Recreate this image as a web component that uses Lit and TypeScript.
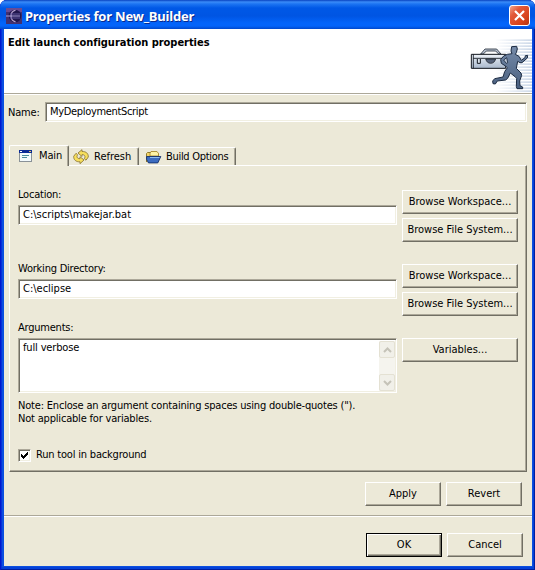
import { LitElement, html, css, svg } from "lit";
import { customElement, property } from "lit/decorators.js";

const eclipseIcon = html`<svg width="16" height="16" viewBox="0 0 16 16">
  <rect width="16" height="16" fill="#43306f"/>
  <rect x="0" y="0" width="16" height="4" fill="#6a4c92"/>
  <circle cx="9" cy="8" r="6.300" fill="#20164c"/>
  <path d="M9.500 2.200a6 6 0 0 0 0 11.600" fill="none" stroke="#b9a3d0" stroke-width="1.200"/>
  <path d="M0 8h14" stroke="#a8a0dc" stroke-width="1.200"/>
  <path d="M4 6h10M4 10h10" stroke="#5d5398" stroke-width="1"/>
</svg>`;

const mainIcon = html`<svg width="14" height="12" viewBox="0 0 14 12" shape-rendering="crispEdges">
  <rect x="0" y="0" width="13" height="12" fill="#8a9298"/>
  <rect x="1" y="3" width="11" height="8" fill="#f3fafc"/>
  <rect x="0" y="0" width="13" height="3" fill="#0a2a96"/>
  <rect x="1" y="1" width="2" height="1" fill="#fff"/>
  <rect x="10" y="1" width="2" height="1" fill="#e8c860"/>
  <rect x="3" y="5" width="7" height="1" fill="#4a8c9c"/>
  <rect x="3" y="7" width="5" height="1" fill="#4a8c9c"/>
</svg>`;

const refreshIcon = html`<svg width="16" height="16" viewBox="0 0 16 16">
  <g fill="#f7df5c" stroke="#8f7a3c" stroke-width=".9" stroke-linejoin="round">
    <path d="M5 4 9 .7V2.500C13 2.300 15.500 4.500 15.300 8L13 11.200 11.300 9.700C12.800 7.500 11.800 5.600 9 5.600V7.500z"/>
    <path d="M11 11 7 14.700V12.800C3 13 .5 10.800 .7 7.300L3 4.300 4.700 5.800C3.200 7.800 4.200 9.700 7 9.700V7.700z"/>
  </g>
</svg>`;

const folderIcon = html`<svg width="17" height="14" viewBox="0 0 17 14">
  <path d="M1.500 12V3.500l1-1h3l1 1h7v4" fill="#f3d468" stroke="#8f7a2c"/>
  <path d="M5 3.500 6 1.500h6l1.500 2V6H5z" fill="#fdf3a6" stroke="#a88a30" stroke-width=".9"/>
  <path d="M3.500 12.900 1.600 9.500V6.500H15.800L12.800 12.900z" fill="#3c6cc0" stroke="#14306c" stroke-width=".9"/>
  <path d="M5 7.500h9.500" stroke="#8dbcf0"/>
</svg>`;

const stripes = Array.from({ length: 19 }, (_, i) => 118 + i * 9);

const runnerArt = html`<svg width="62" height="64" viewBox="90 87 186 192">
  <defs>
    <linearGradient id="fade"><stop offset="0" stop-color="#fff"/><stop offset="1" stop-color="#ccd8e8"/></linearGradient>
    <linearGradient id="case" x2="0" y2="1"><stop offset="0" stop-color="#edf2f8"/><stop offset="1" stop-color="#a9b8cc"/></linearGradient>
    <linearGradient id="body" x2="0" y2="1"><stop offset="0" stop-color="#758aa8"/><stop offset="1" stop-color="#4a6080"/></linearGradient>
  </defs>
  ${stripes.map((y) => svg`<rect x="165" y=${y} width="111" height="5" fill="url(#fade)"/>`)}
  <path d="M122 162 135 147H170L183 162H176L167 153H139L130 162z" fill="#b9c2d0" stroke="#27303d" stroke-width="2.500"/>
  <path d="M94 163H197V205H94z" fill="url(#case)" stroke="#10151c" stroke-width="3"/>
  <path d="M100 163V205M100 175H190" stroke="#10151c" stroke-width="2.500" fill="none"/>
  <path d="M112 177V190H121V177" fill="#dbe3ec" stroke="#10151c" stroke-width="3"/>
  <path d="M137 177H167Q163 190 152 190T137 177" fill="#56637a" stroke="#10151c" stroke-width="2"/>
  <path d="M215 140 230 139 232 147 229 158 226 163 237 169 244 181 255 173 256 167 263 166 262 174 246 188 240 188 233 184 229 205 243 219 245 226 239 243 240 257 248 261 248 266 231 266 229 260 230 235 225 230 211 219 203 235 197 240 172 243 166 252 159 251 158 243 164 236 189 231 194 215 202 203 195 197 184 190 182 179 191 168 202 163 216 161 213 153z" fill="url(#body)" stroke="#1c2b42" stroke-width="3" stroke-linejoin="round"/>
  <path d="M191 180 200 173 203 188 199 190z" fill="#c0cbda" stroke="#17253b" stroke-width="2.500"/>
</svg>`;

@customElement("push-button")
class PushButton extends LitElement {
  @property() label = "";
  @property({ type: Boolean, reflect: true }) primary = false;
  static styles = css`
    :host { display: block; height: 24px; width: 76px; }
    button {
      box-sizing: border-box; width: 100%; height: 24px; padding: 0 0 1px; display: block;
      font: inherit; color: #000; background: #ece9d8; white-space: nowrap;
      border: 1px solid; border-color: #fff #716f64 #716f64 #fff;
      box-shadow: inset -1px -1px #aca899;
    }
    :host([primary]) button { border-color: #000; box-shadow: inset 1px 1px #fff, inset -1px -1px #716f64, inset -2px -2px #aca899; }
  `;
  render() { return html`<button>${this.label}</button>`; }
}

@customElement("text-box")
class TextBox extends LitElement {
  @property() value = "";
  static styles = css`
    :host {
      display: block; box-sizing: border-box; height: 20px; background: #fff; padding: 2px 0 0 4px; line-height: 14px;
      border: 1px solid; border-color: #aca899 #fff #fff #aca899;
      box-shadow: inset 1px 1px #716f64, inset -1px -1px #f1efe2;
    }
  `;
  render() { return html`<span>${this.value}</span>`; }
}

@customElement("app-root")
class AppRoot extends LitElement {
  static styles = css`
    :host {
      display: block; width: 535px; height: 570px; background: #fff; color: #000;
      font: 11px/14px "DejaVu Sans Condensed", "DejaVu Sans", sans-serif; font-stretch: condensed;
    }
    svg { display: block; flex: none; }
    .window {
      box-sizing: border-box; width: 535px; height: 570px; display: flex; flex-direction: column;
      border-radius: 7px 7px 0 0; padding: 0 3px 4px 4px; overflow: hidden;
      background: #0b4fe0;
      box-shadow: inset 1px 0 #0019cf, inset -1px 0 #001ea0, inset 0 -1px #001ea0, inset 2px 0 #0831d9, inset -2px 0 #0441d8, inset 0 -3px #0441d8;
    }
    .title {
      flex: none; height: 29px; margin: 0 -3px 0 -4px; padding: 2px 5px 0 6px; box-sizing: border-box;
      display: flex; align-items: center; gap: 3px;
      background: linear-gradient(#0842c0 0, #3a8bf8 2px, #1c74f2 4px, #0058e6 8px, #0055e3 16px, #0364fa 23px, #0364fa 26px, #0048cc 29px);
    }
    .title h1 {
      margin: 0; flex: 1; color: #fff; font: bold 13px/18px "Noto Sans", sans-serif; letter-spacing: -.2px;
      text-shadow: 1px 1px #0a2a8c; white-space: nowrap;
    }
    .close {
      box-sizing: border-box; width: 21px; height: 21px; padding: 0; border: 1px solid #fff; border-radius: 3px;
      background: linear-gradient(135deg, #f0a58c 0, #e2593a 30%, #d8431b 70%, #b23512);
      display: grid; place-items: center;
    }
    .header { flex: none; height: 64px; background: #fff; display: flex; justify-content: space-between; }
    .header h2 { margin: 0; padding: 7px 0 0 4px; font-size: 11px; line-height: 14px; font-weight: bold; letter-spacing: -.03px; white-space: nowrap; }
    .line { flex: none; height: 1px; background: #aca899; border-bottom: 1px solid #fff; }
    .body { flex: 1; background: #ece9d8; display: flex; flex-direction: column; }
    .name { display: flex; align-items: center; padding: 7px 5px 0 4px; }
    .name label { width: 37px; padding-top: 1px; letter-spacing: -.2px; }
    .name text-box { flex: 1; letter-spacing: -.33px; }
    .tabs { display: flex; align-items: flex-end; height: 20px; margin: 23px 0 0 5px; }
    .tab {
      box-sizing: border-box; height: 18px; display: flex; align-items: center; position: relative; white-space: nowrap;
      border: 1px solid; border-color: #fff #716f64 transparent transparent; border-bottom: 0; border-radius: 2px 2px 0 0;
      box-shadow: inset -1px 0 #aca899; padding: 1px 0 0 5px; gap: 5px;
    }
    .tab.active { height: 21px; margin-bottom: -1px; width: 60px; padding: 0 0 1px 9px; background: #ece9d8; border-left-color: #fff; z-index: 1; gap: 6px; letter-spacing: -.15px; }
    .tab.refresh { width: 70px; padding-left: 3px; }
    .tab.build { width: 97px; padding-left: 5px; gap: 4px; letter-spacing: -.3px; }
    .panel {
      box-sizing: border-box; height: 307px; margin: 0 5px 0 5px; padding: 0 8px;
      border: 1px solid; border-color: #fff #716f64 #716f64 #fff; box-shadow: inset -1px -1px #aca899;
    }
    .row { display: grid; grid-template-columns: 379px 116px; column-gap: 5px; height: 74px; }
    .row.first { padding-top: 24px; }
    .row.second { height: 57px; }
    .field .cap { height: 17px; margin-top: -2px; }
    .cap { height: 17px; white-space: nowrap; letter-spacing: -.22px; }
    .stack { display: flex; flex-direction: column; gap: 4px; }
    push-button.wide { width: 116px; }
    .row.args { height: 59px; }
    .area {
      box-sizing: border-box; height: 55px; background: #fff; display: flex; justify-content: space-between;
      border: 1px solid; border-color: #aca899 #fff #fff #aca899; box-shadow: inset 1px 1px #716f64, inset -1px -1px #f1efe2;
      padding: 2px 1px 1px 4px; letter-spacing: -.15px;
    }
    .scroll { width: 16px; background: #f5f4ee; display: flex; flex-direction: column; justify-content: space-between; }
    .arrow { box-sizing: border-box; width: 16px; height: 17px; border: 1px solid #e4e1d3; border-radius: 2px; background: #f1f0e9; display: grid; place-items: center; }
    .note { margin-top: 2px; line-height: 13px; white-space: nowrap; letter-spacing: -.19px; }
    .check { display: flex; align-items: center; gap: 5px; margin-top: 23px; letter-spacing: -.19px; }
    .box { box-sizing: border-box; width: 13px; height: 13px; background: #fff; border: 1px solid; border-color: #aca899 #fff #fff #aca899; box-shadow: inset 1px 1px #716f64, inset -1px -1px #f1efe2; }
    .actions { display: flex; justify-content: flex-end; gap: 5px; padding: 10px 10px 9px 0; }
    .footer { display: flex; justify-content: flex-end; gap: 5px; padding: 16px 9px 0 0; }
  `;

  render() {
    return html`
      <div class="window">
        <div class="title">
          ${eclipseIcon}
          <h1>Properties for New_Builder</h1>
          <button class="close" aria-label="Close">
            <svg width="13" height="13" viewBox="0 0 13 13"><path d="M2 2 11 11M11 2 2 11" stroke="#fff" stroke-width="2.200"/></svg>
          </button>
        </div>
        <div class="header"><h2>Edit launch configuration properties</h2>${runnerArt}</div>
        <div class="line"></div>
        <div class="body">
          <div class="name"><label>Name:</label><text-box value="MyDeploymentScript"></text-box></div>
          <div class="tabs">
            <div class="tab active">${mainIcon}<span>Main</span></div>
            <div class="tab refresh">${refreshIcon}<span>Refresh</span></div>
            <div class="tab build">${folderIcon}<span>Build Options</span></div>
          </div>
          <div class="panel">
            <div class="row first">
              <div class="field"><div class="cap">Location:</div><text-box value="C:\\scripts\\makejar.bat"></text-box></div>
              <div class="stack"><push-button class="wide" label="Browse Workspace..."></push-button><push-button class="wide" label="Browse File System..."></push-button></div>
            </div>
            <div class="row second">
              <div class="field"><div class="cap">Working Directory:</div><text-box value="C:\\eclipse"></text-box></div>
              <div class="stack"><push-button class="wide" label="Browse Workspace..."></push-button><push-button class="wide" label="Browse File System..."></push-button></div>
            </div>
            <div class="cap">Arguments:</div>
            <div class="row args">
              <div class="area">
                <span>full verbose</span>
                <div class="scroll">
                  <div class="arrow"><svg width="9" height="6" viewBox="0 0 9 6"><path d="M1 5 4.500 1.500 8 5" fill="none" stroke="#c5c3b8" stroke-width="2"/></svg></div>
                  <div class="arrow"><svg width="9" height="6" viewBox="0 0 9 6"><path d="M1 1 4.500 4.500 8 1" fill="none" stroke="#c5c3b8" stroke-width="2"/></svg></div>
                </div>
              </div>
              <div class="stack"><push-button class="wide" label="Variables..."></push-button></div>
            </div>
            <div class="note">Note: Enclose an argument containing spaces using double-quotes (").<br>Not applicable for variables.</div>
            <div class="check">
              <span class="box"><svg width="11" height="11" viewBox="0 0 11 11" shape-rendering="crispEdges"><path d="M2 4v3l2 2 5-5V1L4 6z" fill="#000"/></svg></span>
              <span>Run tool in background</span>
            </div>
          </div>
          <div class="actions"><push-button label="Apply"></push-button><push-button label="Revert"></push-button></div>
          <div class="line"></div>
          <div class="footer"><push-button primary label="OK"></push-button><push-button label="Cancel"></push-button></div>
        </div>
      </div>`;
  }
}
